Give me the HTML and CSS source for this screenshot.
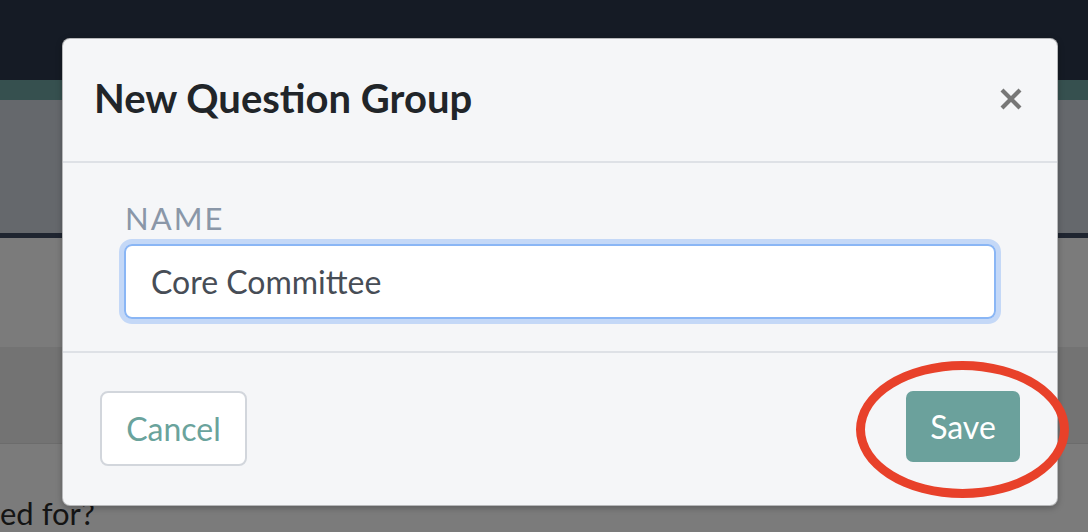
FILE: index.html
```html
<!DOCTYPE html>
<html lang="en">
<head>
    <meta charset="UTF-8">
    <meta name="viewport" content="width=device-width, initial-scale=1.0">
    <title>New Question Group</title>
    <link rel="stylesheet" href="styles.css">
</head>
<body>
    <div class="page">
        <div class="topbar"></div>
        <div class="subbar"></div>
        <div class="panel"></div>
        <div class="panel-rule"></div>
        <div class="row row-light"></div>
        <div class="row row-dark"></div>
        <div class="row row-text">
            <p class="question">ed for?</p>
        </div>
    </div>

    <div class="modal">
        <div class="modal-header">
            <h1 class="modal-title">New Question Group</h1>
            <button type="button" class="close" aria-label="Close">
                <svg width="24" height="24" viewBox="0 0 24 24">
                    <path d="M3 3 L21 21 M21 3 L3 21" stroke="#777" stroke-width="4.2" stroke-linecap="butt"/>
                </svg>
            </button>
        </div>

        <div class="modal-body">
            <label for="name">Name</label>
            <div class="input-ring">
                <input type="text" id="name" value="Core Committee">
            </div>
        </div>

        <div class="modal-footer">
            <button type="button" class="btn btn-cancel">Cancel</button>
            <button type="submit" class="btn btn-save">Save</button>
        </div>

        <div class="highlight"></div>
    </div>
</body>
</html>
```

FILE: styles.css
```css
* {
    margin: 0;
    padding: 0;
    box-sizing: border-box;
}

body {
    font-family: Lato, 'Liberation Sans', sans-serif;
    background-color: #7b7b7b;
    overflow: hidden;
}

/* dimmed page behind the dialog */
.page {
    height: 532px;
}

.topbar {
    height: 80px;
    background-color: #151b25;
}

.subbar {
    height: 20px;
    background-color: #36504f;
}

.panel {
    height: 133px;
    background-color: #65686c;
}

.panel-rule {
    height: 5px;
    background-color: #1f2530;
}

.row-light {
    height: 109px;
    background-color: #7b7b7b;
}

.row-dark {
    height: 97px;
    background-color: #737373;
    border-bottom: 1px solid #6c6c6c;
}

.row-text {
    height: 87px;
    background-color: #7b7b7b;
    overflow: hidden;
}

.question {
    font-size: 31px;
    color: #141414;
    padding-top: 52px;
    line-height: 34px;
}

/* dialog */
.modal {
    position: absolute;
    top: 38px;
    left: 62px;
    width: 996px;
    height: 468px;
    background-color: #f5f6f8;
    border: 1px solid rgba(0, 0, 0, 0.25);
    border-radius: 8px;
    box-shadow: 0 2px 6px rgba(0, 0, 0, 0.25);
}

.modal-header {
    display: flex;
    align-items: center;
    justify-content: space-between;
    height: 124px;
    padding: 0 32px;
    border-bottom: 2px solid #dee1e6;
}

.modal-title {
    font-size: 40px;
    font-weight: 700;
    color: #212529;
    padding-bottom: 4px;
    margin-left: -1px;
}

.close {
    background: none;
    border: none;
    width: 24px;
    height: 24px;
    margin-right: 2px;
    margin-top: -2px;
    cursor: pointer;
}

.close svg {
    display: block;
}

.modal-body {
    height: 190px;
    padding: 38px 56px 0;
    border-bottom: 2px solid #dee1e6;
}

label {
    display: block;
    font-size: 31px;
    line-height: 34px;
    color: #8a97a8;
    text-transform: uppercase;
    letter-spacing: 2px;
    padding-left: 6px;
    margin-bottom: 4px;
}

.input-ring {
    border: 5px solid #c4d8f7;
    border-radius: 13px;
}

input {
    display: block;
    width: 100%;
    height: 75px;
    padding: 0 25px;
    font-family: Lato, 'Liberation Sans', sans-serif;
    font-size: 32px;
    color: #474d56;
    background-color: #fff;
    border: 2px solid #8ab6f5;
    border-radius: 8px;
    outline: none;
}

.modal-footer {
    display: flex;
    justify-content: space-between;
    align-items: flex-start;
    padding: 38px 37px 0;
}

.btn {
    font-family: Lato, 'Liberation Sans', sans-serif;
    font-size: 32px;
    border-radius: 8px;
    cursor: pointer;
}

.btn-cancel {
    width: 147px;
    height: 75px;
    background-color: #fff;
    color: #6aa39c;
    border: 2px solid #d2d6dc;
}

.btn-save {
    width: 114px;
    height: 71px;
    background-color: #6ba19c;
    color: #fff;
    border: none;
    border-radius: 7px;
}

/* red annotation round the Save button */
.highlight {
    position: absolute;
    left: 793px;
    top: 322px;
    width: 213px;
    height: 137px;
    border: 9px solid #e8412a;
    border-radius: 50%;
    pointer-events: none;
}
```
